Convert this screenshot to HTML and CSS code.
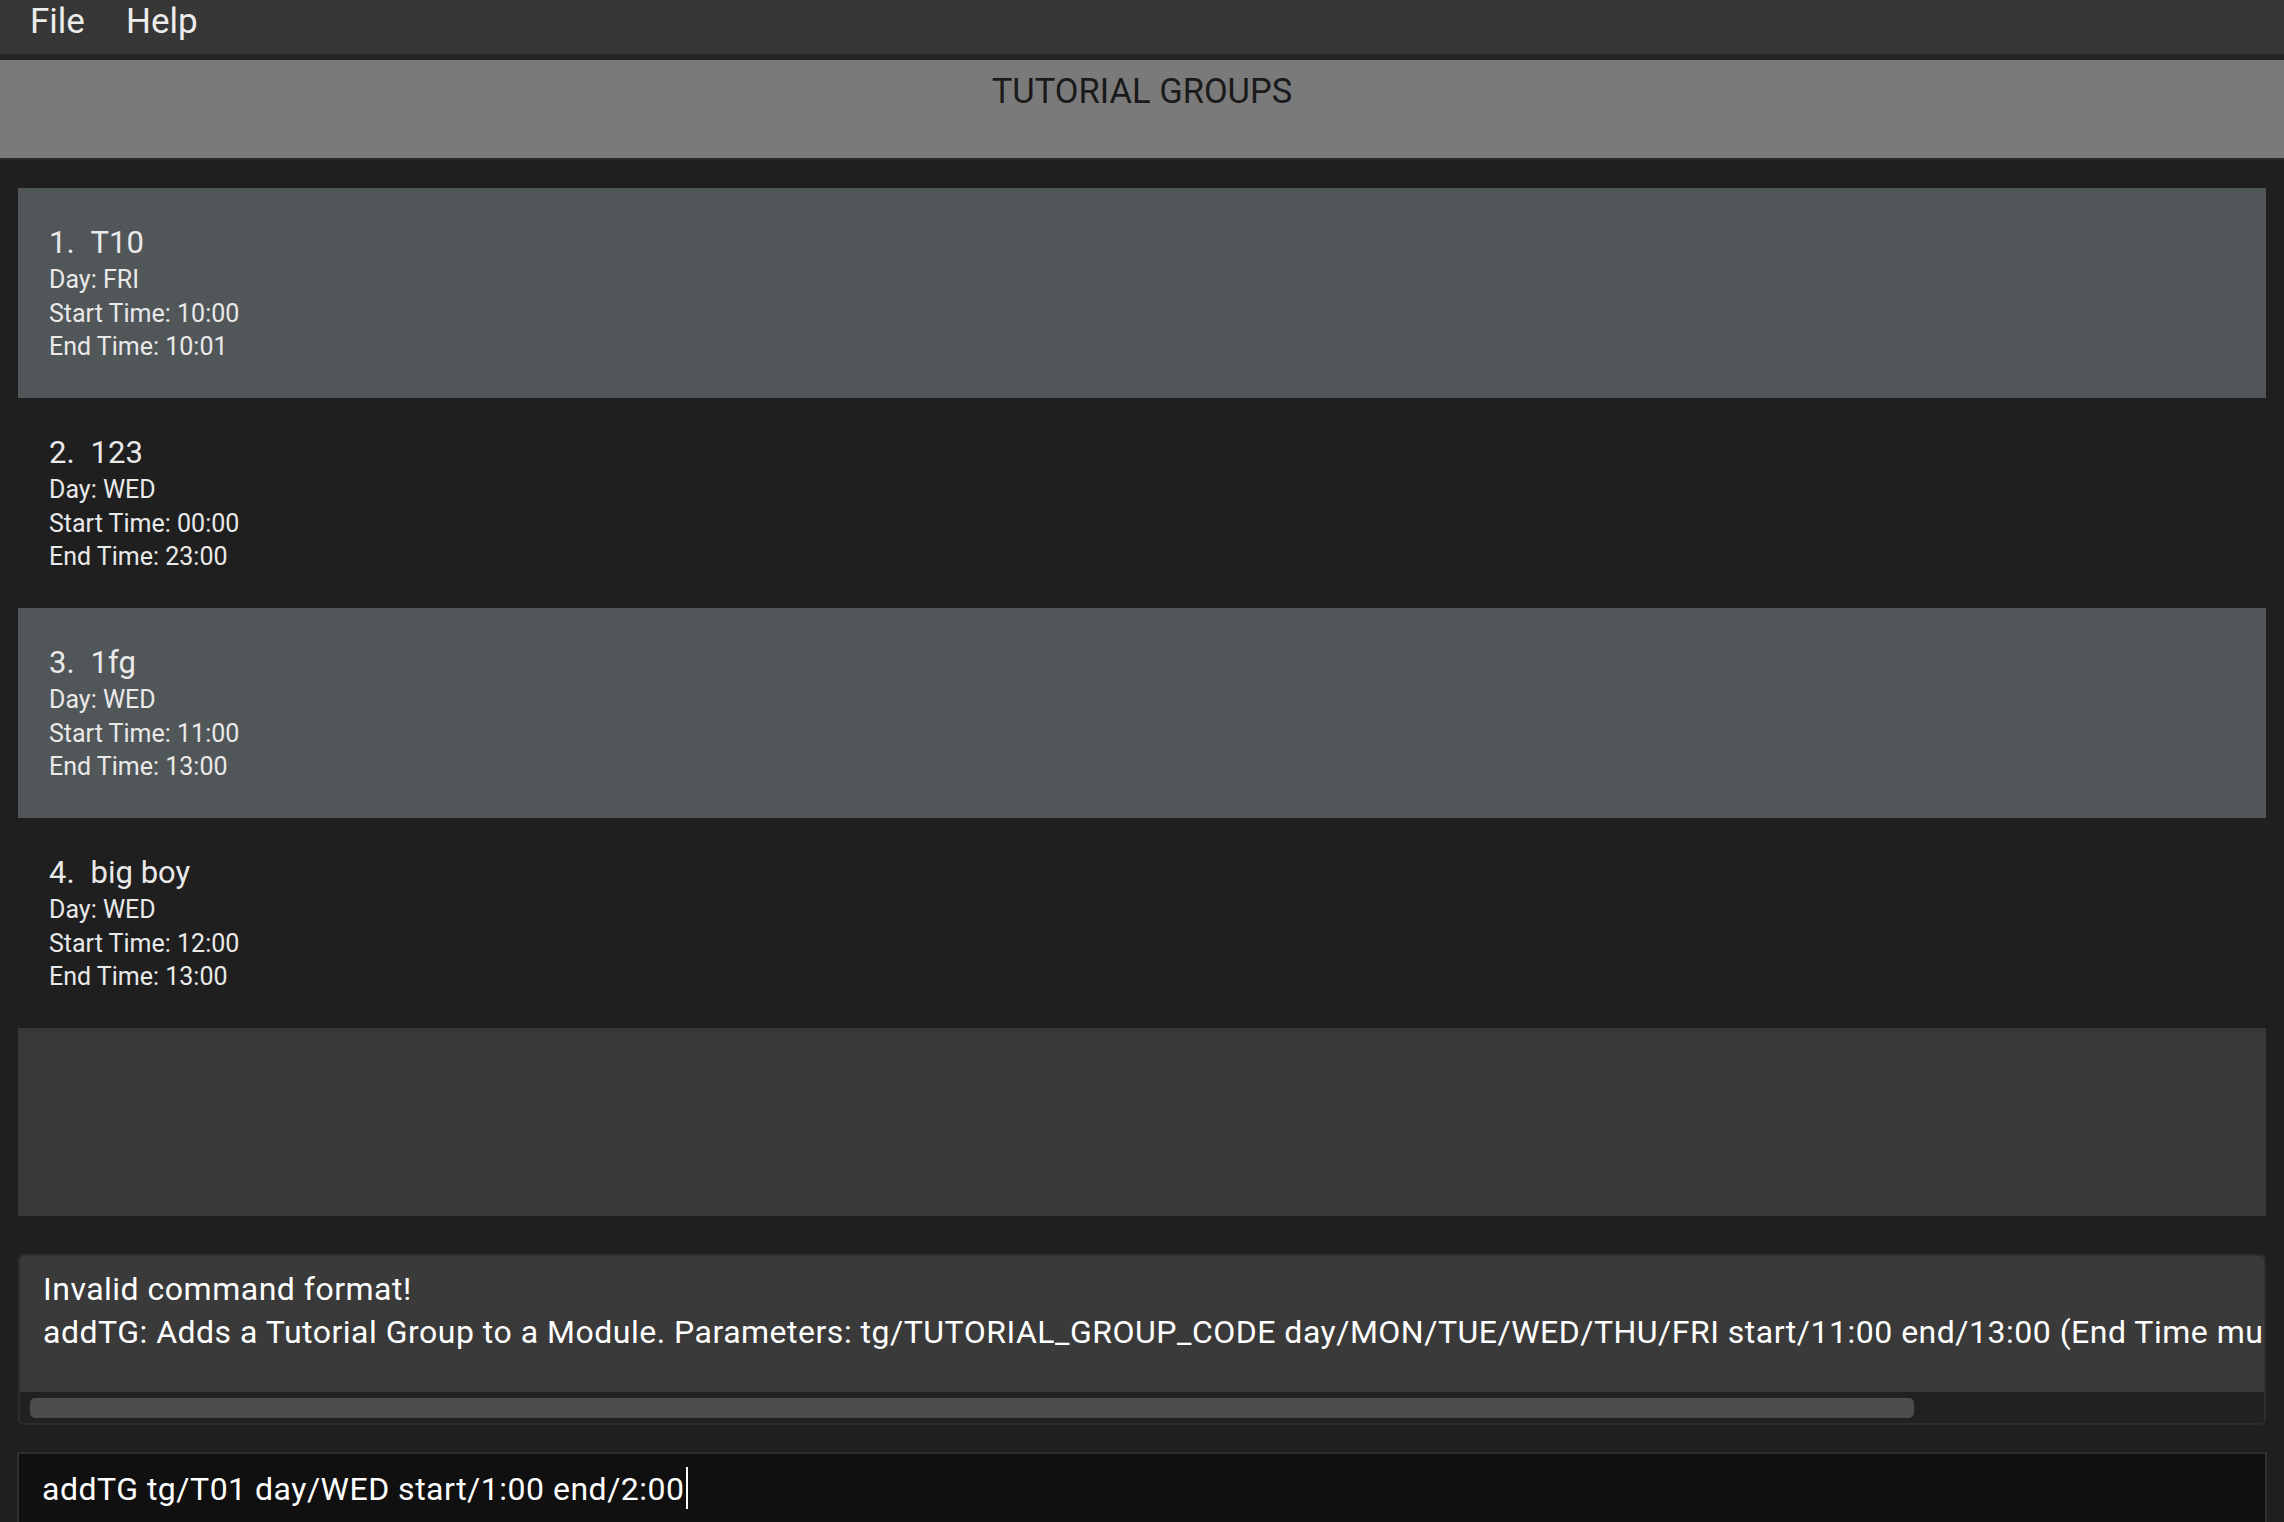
FILE: index.html
```html
<!DOCTYPE html>
<html>
<head>
<meta charset="utf-8">
<title>Tutorial Groups</title>
<link rel="stylesheet" href="styles.css">
</head>
<body>
<div class="app">
  <div class="menubar">
    <span class="menu-item">File</span>
    <span class="menu-item">Help</span>
  </div>
  <div class="title-bar">TUTORIAL GROUPS</div>
  <div class="main">
    <div class="list">
      <div class="card card-shaded">
        <div class="card-head"><span class="card-id">1.</span><span class="card-name">T10</span></div>
        <div class="card-line">Day: FRI</div>
        <div class="card-line">Start Time: 10:00</div>
        <div class="card-line">End Time: 10:01</div>
      </div>
      <div class="card">
        <div class="card-head"><span class="card-id">2.</span><span class="card-name">123</span></div>
        <div class="card-line">Day: WED</div>
        <div class="card-line">Start Time: 00:00</div>
        <div class="card-line">End Time: 23:00</div>
      </div>
      <div class="card card-shaded">
        <div class="card-head"><span class="card-id">3.</span><span class="card-name">1fg</span></div>
        <div class="card-line">Day: WED</div>
        <div class="card-line">Start Time: 11:00</div>
        <div class="card-line">End Time: 13:00</div>
      </div>
      <div class="card">
        <div class="card-head"><span class="card-id">4.</span><span class="card-name">big boy</span></div>
        <div class="card-line">Day: WED</div>
        <div class="card-line">Start Time: 12:00</div>
        <div class="card-line">End Time: 13:00</div>
      </div>
    </div>
    <div class="result">
      <div class="result-text">
        <div class="result-line">Invalid command format!</div>
        <div class="result-line">addTG: Adds a Tutorial Group to a Module. Parameters: tg/TUTORIAL_GROUP_CODE day/MON/TUE/WED/THU/FRI start/11:00 end/13:00 (End Time must be after Start Time)</div>
      </div>
      <div class="hscroll"><div class="hscroll-thumb"></div></div>
    </div>
    <div class="command">
      <span class="command-text">addTG tg/T01 day/WED start/1:00 end/2:00</span><span class="caret"></span>
    </div>
  </div>
</div>
</body>
</html>
```

FILE: styles.css
```css
html, body {
  margin: 0;
  padding: 0;
  height: 1522px;
  overflow: hidden;
  background: #1f1f1f;
  font-family: Roboto, "Noto Sans", sans-serif;
}

.app {
  display: flex;
  flex-direction: column;
  height: 1522px;
}

.menubar {
  display: flex;
  gap: 41px;
  height: 54px;
  padding-left: 30px;
  background: #373737;
  border-bottom: 6px solid #242424;
}

.menu-item {
  font-size: 35px;
  line-height: 44px;
  color: #ececec;
}

.title-bar {
  height: 87px;
  padding-top: 11px;
  background: #7a7a7a;
  border-bottom: 2px solid #292929;
  text-align: center;
  font-size: 34.5px;
  line-height: 40px;
  color: #1a1a1a;
}

.main {
  flex: 1;
  display: flex;
  flex-direction: column;
  padding: 28px 18px 0 18px;
}

.list {
  height: 1028px;
  background: #383838;
  display: flex;
  flex-direction: column;
}

.card {
  height: 210px;
  box-sizing: border-box;
  padding: 35px 0 0 31px;
  background: #1f1f1f;
  color: #e9e9e9;
}

.card-shaded {
  background: #515659;
}

.card-head {
  display: flex;
  gap: 16px;
  font-size: 31px;
  line-height: 40px;
}

.card-line {
  font-size: 25px;
  line-height: 33.5px;
}

.result {
  margin-top: 38px;
  height: 171px;
  box-sizing: border-box;
  border: 2px solid #2d2d2d;
  border-radius: 6px;
  background: #212121;
  display: flex;
  flex-direction: column;
  overflow: hidden;
}

.result-text {
  height: 136px;
  box-sizing: border-box;
  padding: 12px 0 0 23px;
  background: #3a3a3a;
  color: #ffffff;
  font-size: 32px;
  line-height: 43px;
  letter-spacing: 0.5px;
  white-space: nowrap;
  overflow: hidden;
}

.hscroll {
  flex: 1;
  padding: 6px 0 0 10px;
  background: #212121;
}

.hscroll-thumb {
  width: 1884px;
  height: 20px;
  border-radius: 5px;
  background: #4d4d4d;
}

.command {
  margin-top: 27px;
  flex: 1;
  margin-left: -1px;
  margin-right: -1px;
  border: 2px solid #2e2e2e;
  border-bottom: none;
  background: #101010;
  padding: 9px 0 0 23px;
  display: flex;
  align-items: flex-start;
  color: #ffffff;
  font-size: 32px;
  line-height: 52px;
  letter-spacing: 0.5px;
  white-space: nowrap;
}

.caret {
  display: inline-block;
  width: 2px;
  height: 42px;
  margin-top: 4px;
  margin-left: 1px;
  background: #ffffff;
}
```
